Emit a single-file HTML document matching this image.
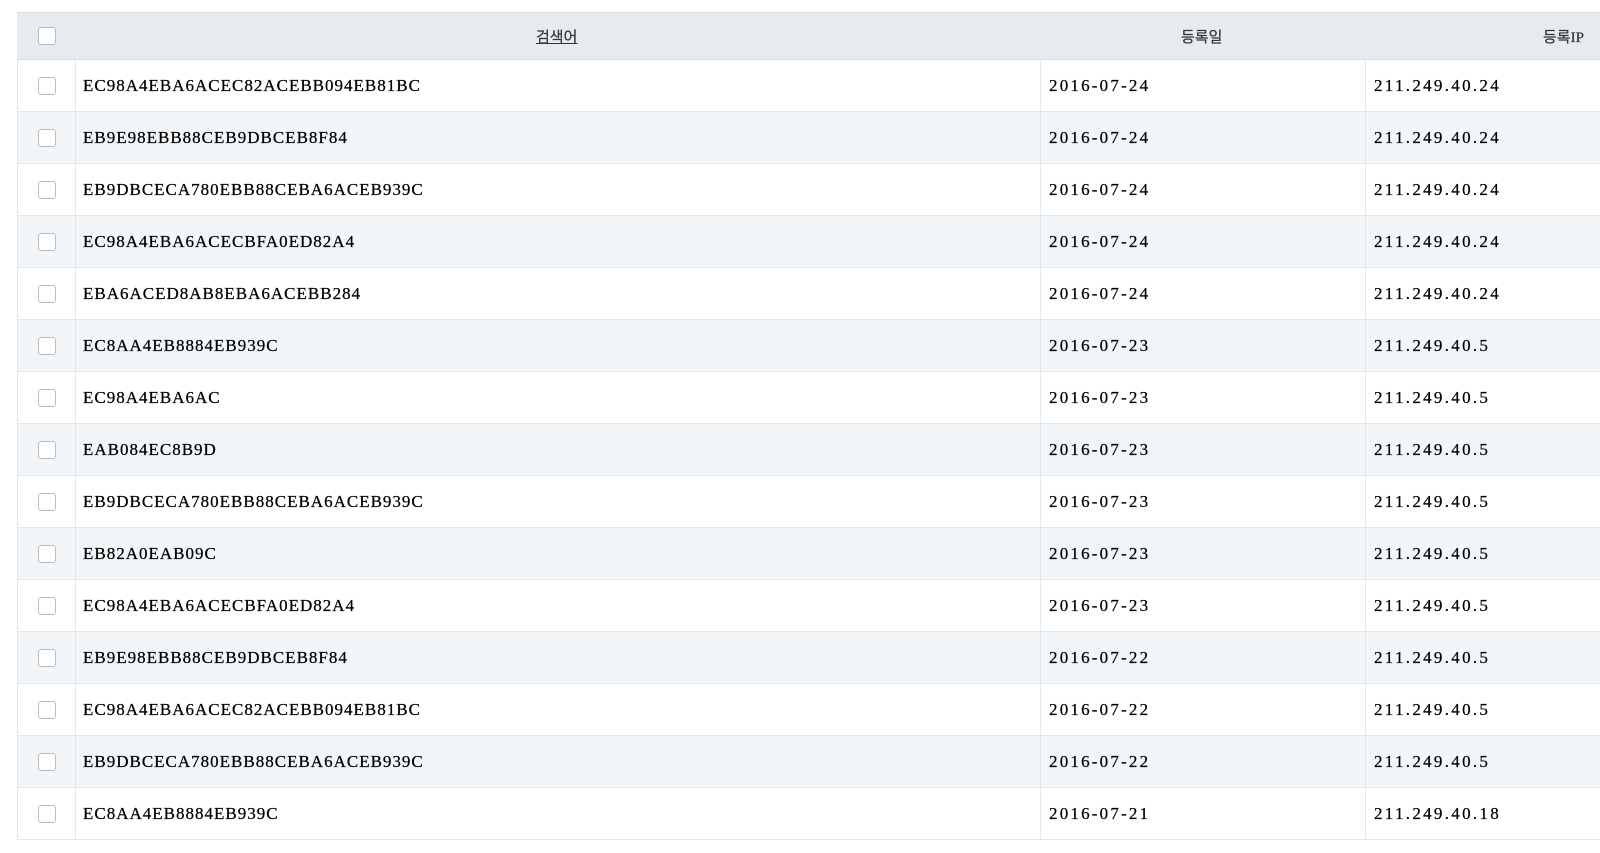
<!DOCTYPE html>
<html><head><meta charset="utf-8"><style>
body{margin:0;background:#fff;width:1600px;height:853px;overflow:hidden;position:relative;font-family:"Liberation Serif","Noto Serif CJK SC",serif;}
.r{position:absolute;left:17px;width:1600px;height:51px;border-bottom:1px solid #e3e8ec;background:#fff}
.r.e{background:#f3f6f9}
.h{top:12px;height:46px;background:#e5ebee;border-top:1px solid #d6dfe4;border-bottom:1px solid #d6dfe4}
.c{position:absolute;top:0;bottom:0;display:flex;align-items:center;font-size:17px;color:#000;letter-spacing:1px;white-space:nowrap;-webkit-text-stroke:0.25px #000}
.c0{left:0;width:57px;justify-content:center;border-left:1px solid #e3e8ec;border-right:1px solid #e3e8ec;height:100%}
.c1{left:66px}.c2{left:1032px;letter-spacing:2.2px}.c3{left:1357px;letter-spacing:2.3px}
.v{position:absolute;top:0;bottom:0;width:1px;background:#e3e8ec}
.h .c{font-size:15px;color:#333;letter-spacing:0;-webkit-text-stroke:0.2px #333;font-family:"Liberation Serif","Noto Sans CJK KR",serif}
.cb{width:16px;height:16px;border:1px solid #bbb;border-radius:3px;background:#fff}
</style></head><body>
<div class="r h"><div class="c c0"><div class="cb"></div></div><div class="c" style="left:519px"><u>검색어</u></div><div class="v" style="left:1023px"></div><div class="c" style="left:1164px">등록일</div><div class="v" style="left:1348px"></div><div class="c" style="left:1526px">등록IP</div></div>
<div id="rows"></div>
<script>
var d=[["EC98A4EBA6ACEC82ACEBB094EB81BC","2016-07-24","211.249.40.24"],["EB9E98EBB88CEB9DBCEB8F84","2016-07-24","211.249.40.24"],["EB9DBCECA780EBB88CEBA6ACEB939C","2016-07-24","211.249.40.24"],["EC98A4EBA6ACECBFA0ED82A4","2016-07-24","211.249.40.24"],["EBA6ACED8AB8EBA6ACEBB284","2016-07-24","211.249.40.24"],["EC8AA4EB8884EB939C","2016-07-23","211.249.40.5"],["EC98A4EBA6AC","2016-07-23","211.249.40.5"],["EAB084EC8B9D","2016-07-23","211.249.40.5"],["EB9DBCECA780EBB88CEBA6ACEB939C","2016-07-23","211.249.40.5"],["EB82A0EAB09C","2016-07-23","211.249.40.5"],["EC98A4EBA6ACECBFA0ED82A4","2016-07-23","211.249.40.5"],["EB9E98EBB88CEB9DBCEB8F84","2016-07-22","211.249.40.5"],["EC98A4EBA6ACEC82ACEBB094EB81BC","2016-07-22","211.249.40.5"],["EB9DBCECA780EBB88CEBA6ACEB939C","2016-07-22","211.249.40.5"],["EC8AA4EB8884EB939C","2016-07-21","211.249.40.18"]];
var h="";d.forEach(function(x,i){h+='<div class="r'+(i%2?' e':'')+'" style="top:'+(60+i*52)+'px"><div class="c c0"><div class="cb"></div></div><div class="c c1">'+x[0]+'</div><div class="v" style="left:1023px"></div><div class="c c2">'+x[1]+'</div><div class="v" style="left:1348px"></div><div class="c c3">'+x[2]+'</div></div>';});
document.getElementById("rows").innerHTML=h;
</script>
</body></html>
